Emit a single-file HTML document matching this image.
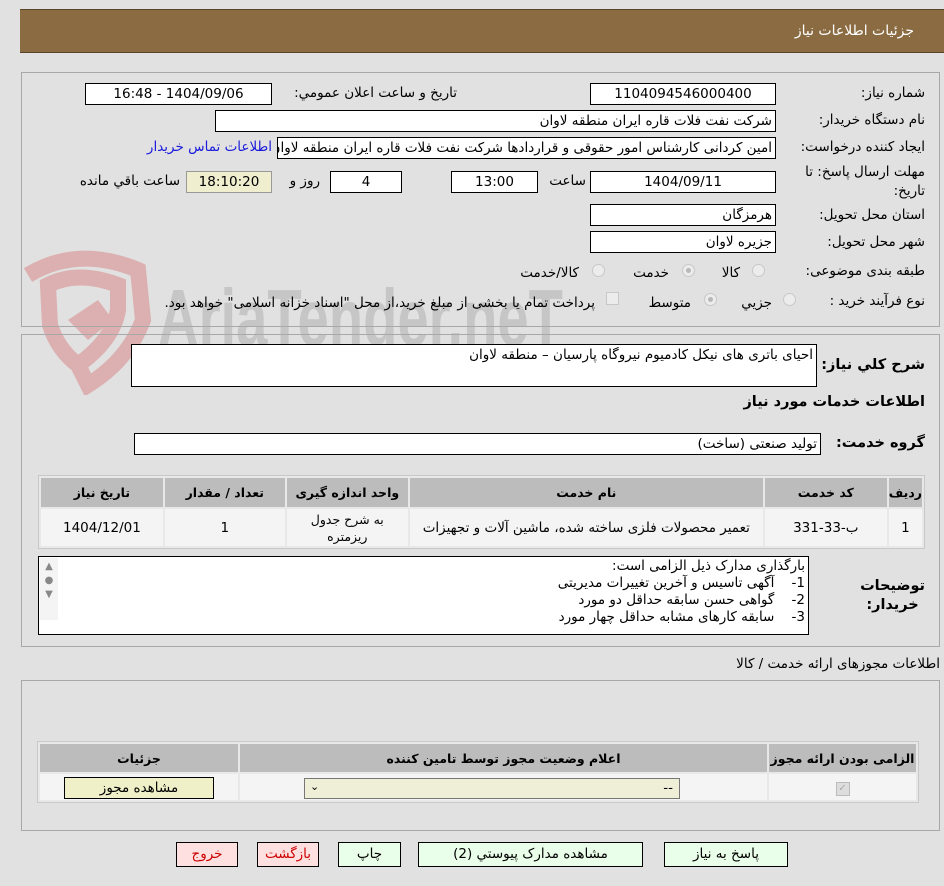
<!DOCTYPE html>
<html><head><meta charset="utf-8"><style>
body{margin:0;width:944px;height:886px;background:#e1e1e1;font-family:"DejaVu Sans","Liberation Sans",sans-serif;font-size:13.5px;color:#000;position:relative;overflow:hidden}
.a{position:absolute}
.in{position:absolute;background:#fff;border:1px solid #000;box-sizing:border-box;direction:rtl;padding:0 3px;line-height:20px;white-space:nowrap;overflow:hidden}
.c{text-align:center}
.l{position:absolute;direction:rtl;white-space:nowrap}
.b{font-weight:bold}
.panel{position:absolute;border:1px solid #a8a8a8;box-sizing:border-box}
table{border-collapse:separate;border-spacing:2px;background:#e8e8e8;border:1px solid #c8c8c8}
td,th{padding:0;text-align:center;direction:rtl}
th{background:#bcbcbc;font-size:12.5px}
td{background:#f4f4f4}
.btn{position:absolute;border:1px solid #000;box-sizing:border-box;text-align:center;line-height:22px;direction:rtl}
.rad{position:absolute;width:13px;height:13px;border-radius:50%;border:1px solid #c8c8c8;background:#ececec;box-sizing:border-box}
.rad.on::after{content:"";position:absolute;left:3px;top:3px;width:5px;height:5px;border-radius:50%;background:#b8b8b8}
</style></head><body>
<div class="a" style="left:20px;top:9px;width:924px;height:44px;background:#8b6b42;border-top:1px solid #5a4428;border-bottom:1px solid #5a4428;box-sizing:border-box"></div>
<div class="l" style="right:30px;top:23px;color:#fff;font-size:14px">جزئیات اطلاعات نیاز</div>

<!-- watermark -->
<svg class="a" style="left:18px;top:245px" width="560" height="150">
<path d="M10 30 Q60 0 120 25 L125 75 Q110 115 70 140 L60 120 Q95 95 100 65 L100 40 Q60 25 30 40 L32 80 Q40 105 60 120" fill="none" stroke="#dcb0b0" stroke-width="16"/>
<path d="M50 75 L80 55 L95 75 L70 95Z" fill="#dcb0b0"/>
<text x="140" y="100" font-family="Liberation Sans Narrow, Liberation Sans" font-size="80" font-weight="bold" fill="#c6c6c6" textLength="405" lengthAdjust="spacingAndGlyphs">AriaTender.neT</text>
</svg>

<div class="panel" style="left:21px;top:72px;width:919px;height:255px"></div>
<div class="panel" style="left:21px;top:334px;width:919px;height:313px"></div>

<div class="l" style="right:19px;top:85px">شماره نیاز:</div>
<div class="in c" style="left:590px;top:83px;width:186px;height:22px">1104094546000400</div>
<div class="l" style="right:487px;top:85px">تاریخ و ساعت اعلان عمومي:</div>
<div class="in c" style="left:85px;top:83px;width:187px;height:22px">1404/09/06 - 16:48</div>

<div class="l" style="right:19px;top:112px">نام دستگاه خریدار:</div>
<div class="in" style="left:215px;top:110px;width:561px;height:22px">شرکت نفت فلات قاره ایران منطقه لاوان</div>

<div class="l" style="right:19px;top:139px">ایجاد کننده درخواست:</div>
<div class="in" style="left:277px;top:137px;width:499px;height:22px">امین کردانی کارشناس امور حقوقی و قراردادها شرکت نفت فلات قاره ایران منطقه لاوان</div>
<div class="l" style="right:672px;top:139px;color:#1a1adc">اطلاعات تماس خریدار</div>

<div class="l" style="right:19px;top:164px">مهلت ارسال پاسخ: تا</div>
<div class="l" style="right:19px;top:183px">تاریخ:</div>
<div class="in c" style="left:590px;top:171px;width:186px;height:22px">1404/09/11</div>
<div class="l" style="right:358px;top:173px">ساعت</div>
<div class="in c" style="left:451px;top:171px;width:87px;height:22px">13:00</div>
<div class="in c" style="left:330px;top:171px;width:72px;height:22px">4</div>
<div class="l" style="right:624px;top:173px">روز و</div>
<div class="in c" style="left:186px;top:171px;width:86px;height:22px;background:#efefd0;border-color:#999">18:10:20</div>
<div class="l" style="right:764px;top:173px">ساعت باقي مانده</div>

<div class="l" style="right:19px;top:207px">استان محل تحویل:</div>
<div class="in" style="left:590px;top:204px;width:186px;height:22px">هرمزگان</div>
<div class="l" style="right:19px;top:234px">شهر محل تحویل:</div>
<div class="in" style="left:590px;top:231px;width:186px;height:22px">جزیره لاوان</div>

<div class="l" style="right:19px;top:263px">طبقه بندی موضوعی:</div>
<div class="rad" style="left:752px;top:264px"></div><div class="l" style="right:204px;top:265px">کالا</div>
<div class="rad on" style="left:682px;top:264px"></div><div class="l" style="right:275px;top:265px">خدمت</div>
<div class="rad" style="left:592px;top:264px"></div><div class="l" style="right:365px;top:265px">کالا/خدمت</div>

<div class="l" style="right:19px;top:293px">نوع فرآیند خرید :</div>
<div class="rad" style="left:783px;top:293px"></div><div class="l" style="right:172px;top:295px">جزيي</div>
<div class="rad on" style="left:704px;top:293px"></div><div class="l" style="right:253px;top:295px">متوسط</div>
<div class="a" style="left:606px;top:292px;width:13px;height:13px;border:1px solid #c8c8c8;background:#ececec;box-sizing:border-box"></div>
<div class="l" style="right:349px;top:295px">پرداخت تمام یا بخشی از مبلغ خرید،از محل "اسناد خزانه اسلامی" خواهد بود.</div>

<div class="l b" style="right:19px;top:357px;font-size:14.5px">شرح کلي نیاز:</div>
<div class="in" style="left:131px;top:344px;width:686px;height:43px;line-height:20px">احیای باتری های نیکل کادمیوم نیروگاه پارسیان – منطقه لاوان</div>
<div class="l b" style="right:19px;top:394px;font-size:14.5px">اطلاعات خدمات مورد نیاز</div>
<div class="l b" style="right:19px;top:435px;font-size:14.5px">گروه خدمت:</div>
<div class="in" style="left:134px;top:433px;width:687px;height:22px">تولید صنعتی (ساخت)</div>

<table class="a" style="left:38px;top:475px;width:887px;height:74px;direction:rtl">
<tr style="height:29px"><th style="width:31px">ردیف</th><th style="width:122px">کد خدمت</th><th style="width:353px">نام خدمت</th><th style="width:121px">واحد اندازه گیری</th><th style="width:120px">تعداد / مقدار</th><th>تاریخ نیاز</th></tr>
<tr><td>1</td><td>ب-33-331</td><td>تعمیر محصولات فلزی ساخته شده، ماشین آلات و تجهیزات</td><td style="font-size:12.5px;line-height:17px">به شرح جدول<br>ریزمتره</td><td>1</td><td>1404/12/01</td></tr>
</table>

<div class="l b" style="right:19px;top:577px;font-size:14.5px;line-height:19px;text-align:center">توضیحات<br>خریدار:</div>
<div class="in" style="left:38px;top:556px;width:771px;height:79px;line-height:17px;padding-top:1px;white-space:pre">بارگذاری مدارک ذیل الزامی است:
1-    آگهی تاسیس و آخرین تغییرات مدیریتی
2-    گواهی حسن سابقه حداقل دو مورد
3-    سابقه کارهای مشابه حداقل چهار مورد</div>
<div class="a" style="left:40px;top:558px;width:18px;height:60px;background:#f4f4f4;color:#888;font-size:10px;text-align:center;line-height:14px;padding-top:2px">▲<br>●<br>▼</div>

<div class="l" style="right:4px;top:656px">اطلاعات مجوزهای ارائه خدمت / کالا</div>
<div class="panel" style="left:21px;top:680px;width:919px;height:151px"></div>
<table class="a" style="left:37px;top:741px;width:882px;height:62px;direction:rtl">
<tr style="height:28px"><th style="width:147px">الزامی بودن ارائه مجوز</th><th style="width:527px">اعلام وضعیت مجوز توسط تامین کننده</th><th>جزئیات</th></tr>
<tr><td><span style="display:inline-block;width:12px;height:12px;border:1px solid #bbb;background:#ddd;color:#aaa;font-size:10px;line-height:12px">✓</span></td><td></td><td></td></tr>
</table>
<div class="a" style="left:304px;top:778px;width:376px;height:21px;background:#efefd8;border:1px solid #777;box-sizing:border-box"><span style="position:absolute;left:5px;top:1px;font-size:11px">⌄</span><span style="position:absolute;right:6px;top:1px">--</span></div>
<div class="btn" style="left:64px;top:777px;width:150px;height:22px;background:#efefc8;line-height:20px">مشاهده مجوز</div>

<div class="btn" style="left:664px;top:842px;width:124px;height:25px;background:#eaffea">پاسخ به نیاز</div>
<div class="btn" style="left:418px;top:842px;width:225px;height:25px;background:#eaffea">مشاهده مدارک پیوستي (2)</div>
<div class="btn" style="left:338px;top:842px;width:63px;height:25px;background:#eaffea">چاپ</div>
<div class="btn" style="left:257px;top:842px;width:62px;height:25px;background:#ffe0e0;color:#c00">بازگشت</div>
<div class="btn" style="left:176px;top:842px;width:62px;height:25px;background:#ffe0e0;color:#c00">خروج</div>
</body></html>
